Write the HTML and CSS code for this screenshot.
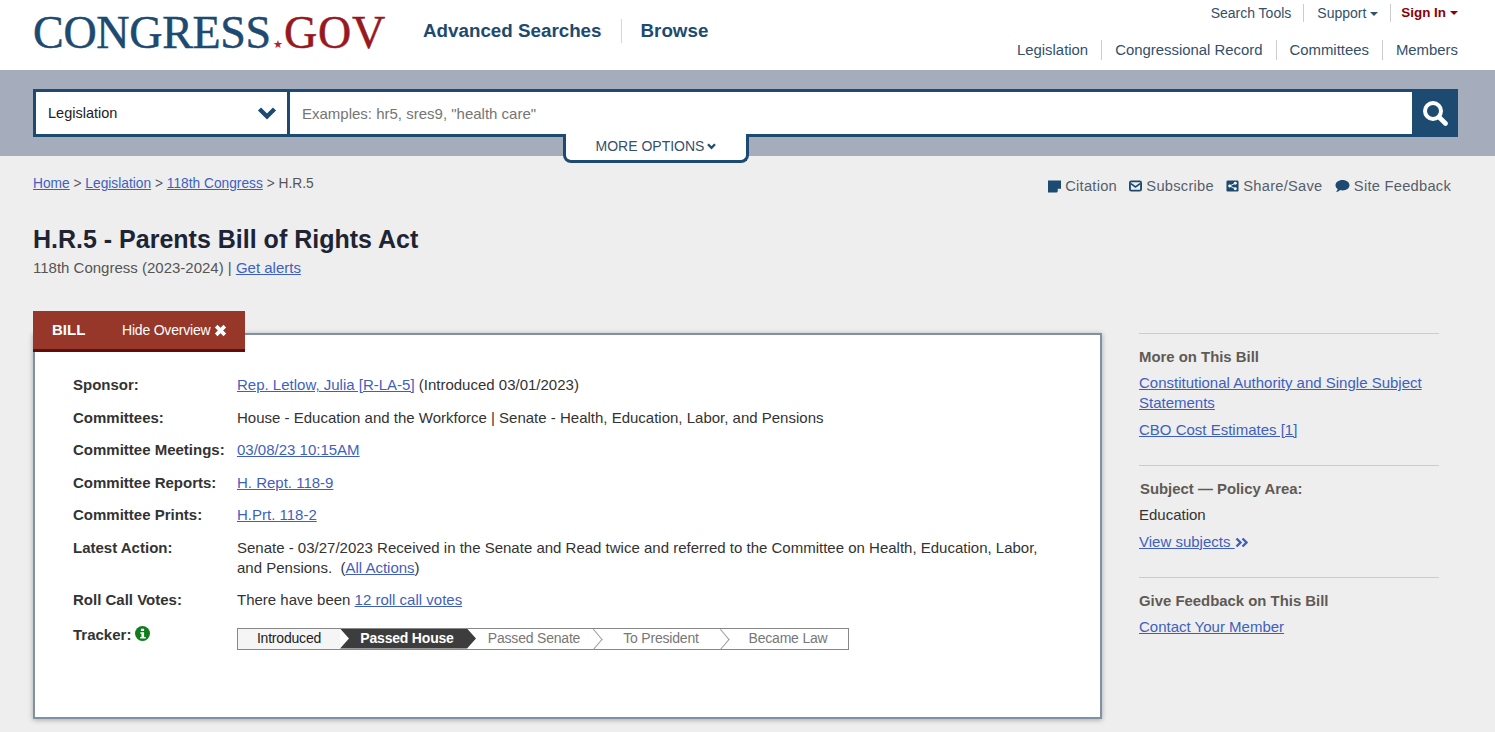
FILE: index.html
```html
<!DOCTYPE html>
<html lang="en">
<head>
<meta charset="utf-8">
<title>H.R.5 - Parents Bill of Rights Act</title>
<link rel="stylesheet" href="styles.css">
</head>
<body>
<header class="header">
  <div class="logo"><span class="logo-blue">CONGRESS</span><span class="logo-star">★</span><span class="logo-red">GOV</span></div>
  <nav class="mainnav"><a class="first">Advanced Searches</a><a>Browse</a></nav>
  <div class="rightnav">
    <div class="toprow"><a>Search Tools</a><a>Support<i class="caret"></i></a><a class="signin">Sign In<i class="caret"></i></a></div>
    <div class="botrow"><a>Legislation</a><a>Congressional Record</a><a>Committees</a><a>Members</a></div>
  </div>
</header>
<section class="searchband">
  <div class="searchbox">
    <div class="select"><span>Legislation</span>
      <svg class="chev" viewBox="0 0 20 14" width="20" height="14"><path d="M2.500 3 10 10.500 17.500 3" fill="none" stroke="#1d4a70" stroke-width="4.400"/></svg>
    </div>
    <div class="input">Examples: hr5, sres9, "health care"</div>
    <div class="go"><svg viewBox="0 0 26 26" width="26" height="26"><circle cx="11" cy="11" r="8" fill="none" stroke="#fff" stroke-width="4"/><path d="M17 17l6.500 6.500" stroke="#fff" stroke-width="4.600" stroke-linecap="round"/></svg></div>
  </div>
  <div class="more">MORE OPTIONS<svg viewBox="0 0 10 8" width="9" height="7"><path d="M1 1.500 5 5.500 9 1.500" fill="none" stroke="#1d4a70" stroke-width="2.600"/></svg></div>
</section>
<main class="main">
  <div class="crumbrow">
    <div class="crumbs"><a>Home</a> &gt; <a>Legislation</a> &gt; <a>118th Congress</a> &gt; H.R.5</div>
    <div class="tools">
      <span><svg viewBox="0 0 14 14" width="13" height="14"><path d="M0 1h14v8.500L9.500 14H0z" fill="#1d4a70"/><path d="M10.500 13.500v-3.500h3.500z" fill="#eee"/></svg> Citation</span>
      <span><svg viewBox="0 0 14 14" width="13" height="14"><rect x="1" y="2" width="12" height="10" rx="1.500" fill="none" stroke="#1d4a70" stroke-width="2"/><path d="M2 4.500 7 8l5-3.500" fill="none" stroke="#1d4a70" stroke-width="1.800"/></svg> Subscribe</span>
      <span><svg viewBox="0 0 14 14" width="13" height="14"><rect x="0.500" y="1" width="13" height="12" rx="1.500" fill="#1d4a70"/><circle cx="10" cy="4" r="1.600" fill="#fff"/><circle cx="10" cy="10" r="1.600" fill="#fff"/><circle cx="4" cy="7" r="1.600" fill="#fff"/><path d="M10 4 4 7l6 3" fill="none" stroke="#fff"/></svg> Share/Save</span>
      <span><svg viewBox="0 0 15 14" width="15" height="14"><path d="M7.500 1c3.900 0 7 2.300 7 5.200s-3.100 5.200-7 5.200c-.8 0-1.600-.1-2.300-.3C4 12.300 2.500 13 1 13c.9-.8 1.500-1.800 1.700-2.900C1.300 9.200.5 7.700.5 6.200.5 3.300 3.600 1 7.500 1z" fill="#1d4a70"/></svg> Site Feedback</span>
    </div>
  </div>
  <h1 class="title">H.R.5 - Parents Bill of Rights Act</h1>
  <div class="sub">118th Congress (2023-2024) | <a>Get alerts</a></div>
  <div class="columns">
    <div class="overview">
      <div class="tab"><b>BILL</b><span>Hide Overview <svg viewBox="0 0 12 12" width="13" height="13"><path d="M2 2l8 8M10 2l-8 8" stroke="#fff" stroke-width="3.400"/></svg></span></div>
      <div class="panel">
        <table class="facts">
          <tr><th>Sponsor:</th><td><a>Rep. Letlow, Julia [R-LA-5]</a> (Introduced 03/01/2023)</td></tr>
          <tr><th>Committees:</th><td>House - Education and the Workforce | Senate - Health, Education, Labor, and Pensions</td></tr>
          <tr><th>Committee Meetings:</th><td><a>03/08/23 10:15AM</a></td></tr>
          <tr><th>Committee Reports:</th><td><a>H. Rept. 118-9</a></td></tr>
          <tr><th>Committee Prints:</th><td><a>H.Prt. 118-2</a></td></tr>
          <tr><th>Latest Action:</th><td>Senate - 03/27/2023 Received in the Senate and Read twice and referred to the Committee on Health, Education, Labor, and Pensions.&nbsp; (<a>All Actions</a>)</td></tr>
          <tr><th>Roll Call Votes:</th><td>There have been <a>12 roll call votes</a></td></tr>
          <tr class="trackrow"><th>Tracker: <svg class="info" viewBox="0 0 14 14" width="15" height="15"><circle cx="7" cy="7" r="7" fill="#0f7d1c"/><path d="M5.500 2.500h3v2.200h-3zM5 5.800h3.500v4.400H10v1.500H4.800v-1.500H6V7.300H5z" fill="#fff"/></svg></th>
            <td><ol class="tracker">
              <li class="done">Introduced</li><li class="now"><span>Passed House</span></li><li>Passed Senate</li><li>To President</li><li>Became Law</li>
            </ol></td></tr>
        </table>
      </div>
    </div>
    <aside class="side">
      <section><h3>More on This Bill</h3><p><a>Constitutional Authority and Single Subject Statements</a></p><p><a>CBO Cost Estimates [1]</a></p></section>
      <section><h3 class="nudge">Subject — Policy Area:</h3><p>Education</p><p><a>View subjects </a><svg viewBox="0 0 14 10" width="14" height="11"><path d="M1.500 1 5.500 5 1.500 9M7.500 1l4 4-4 4" fill="none" stroke="#3f5fbf" stroke-width="2.400"/></svg></p></section>
      <section><h3>Give Feedback on This Bill</h3><p><a>Contact Your Member</a></p></section>
    </aside>
  </div>
</main>
</body>
</html>
```
FILE: styles.css
```css
* { box-sizing: border-box; }
html, body { margin: 0; height: 732px; overflow: hidden; }
body { font-family: "Liberation Sans", Arial, sans-serif; font-size: 15px; color: #333; background: #eee; }
a { color: inherit; }

.header { height: 70px; background: #fff; display: flex; padding: 0 37px 0 33px; }
.logo { font-family: "Liberation Serif", serif; font-size: 46px; line-height: 42px; padding-top: 12px; letter-spacing: -0.3px; width: 370px; white-space: nowrap; flex: none; -webkit-text-stroke: .5px; }
.logo-blue { color: #1d4a70; }
.logo-red { color: #97191f; letter-spacing: .8px; }
.logo-star { color: #b2232a; font-size: 11px; margin: 0 1px 0 2px; letter-spacing: 0; -webkit-text-stroke: 0; }
.mainnav { display: flex; align-items: flex-start; padding-top: 19px; color: #1d4a70; font-weight: bold; font-size: 18.8px; line-height: 24px; }
.mainnav a { padding: 0 0 0 19px; }
.mainnav .first { padding: 0 19px 0 20px; border-right: 1px solid #d5d5d5; }
.rightnav { margin-left: auto; color: #33506b; text-align: right; }
.toprow, .botrow { display: flex; justify-content: flex-end; }
.toprow { padding-top: 4px; font-size: 14px; line-height: 18px; }
.toprow a { padding: 0 12px 0 13px; border-right: 1px solid #ccc; }
.toprow a:last-child { border: 0; padding-right: 0; padding-left: 10px; }
.signin { color: #8b0000; font-size: 13.4px; font-weight: bold; }
.caret { display: inline-block; border: 4.500px solid transparent; border-top-color: currentColor; border-bottom: 0; vertical-align: 2px; margin-left: 4px; }
.botrow { padding-top: 18px; font-size: 14.9px; line-height: 20px; }
.botrow a { padding: 0 13px; border-right: 1px solid #ccc; }
.botrow a:last-child { border: 0; padding-right: 0; }

.searchband { height: 86px; background: #a5adbd; padding: 19px 37px 0 33px; position: relative; }
.searchbox { height: 48px; display: flex; background: #fff; border: 3px solid #1d4a70; }
.select { width: 254px; border-right: 3px solid #1d4a70; padding: 0 10px 0 12px; display: flex; align-items: center; justify-content: space-between; color: #222; font-size: 14.5px; flex: none; }
.input { flex: 1; padding: 1px 0 0 12px; display: flex; align-items: center; color: #757575; font-size: 15px; }
.go { width: 46px; margin: -3px -3px -3px 0; background: #1d4a70; display: flex; align-items: center; justify-content: center; }
.more { position: absolute; left: 563px; top: 64px; width: 186px; height: 29px; background: #fff; border: 3px solid #1d4a70; border-top: 0; border-radius: 0 0 8px 8px; text-align: center; font-size: 14px; line-height: 24px; color: #33506b; }
.more svg { margin-left: 3px; vertical-align: 1px; }

.main { padding: 0 37px 0 33px; }
.crumbrow { display: flex; justify-content: space-between; height: 60px; padding-top: 19px; }
.crumbs { font-size: 13.75px; line-height: 17px; color: #555; }
.crumbs a, .sub a, .facts a, .side a { color: #3f5fbf; text-decoration: underline; }
.tools { display: flex; gap: 12px; padding: 2px 7px 0 0; font-size: 14.7px; line-height: 19px; color: #555e6b; letter-spacing: .25px; }
.tools svg { vertical-align: -2px; }
.title { margin: 0; font-size: 25px; line-height: 30px; color: #1e2433; padding-top: 8px; }
.sub { font-size: 15px; line-height: 20px; color: #555; padding-top: 4px; }

.columns { display: flex; padding-top: 33px; }
.overview { width: 1069px; flex: none; position: relative; padding-top: 22px; }
.tab { position: absolute; left: 0; top: 0; width: 212px; height: 41px; background: #96372a; border-bottom: 3px solid #5e0f0c; color: #fff; display: flex; align-items: center; padding: 0 0 2px 19px; z-index: 1; font-size: 14px; }
.tab b { font-size: 15px; width: 70px; }
.tab span { letter-spacing: -.2px; white-space: nowrap; padding-top: 2px; }
.tab svg { vertical-align: -2px; }
.panel { height: 386px; background: #fff; border: 2px solid #7f92a5; box-shadow: 0 1px 5px rgba(0,0,0,.3); padding: 40px 38px 0 38px; }
.facts { border-collapse: collapse; width: 100%; }
.facts th { width: 164px; text-align: left; vertical-align: top; font-weight: bold; color: #333; font-size: 15px; line-height: 20px; padding: 0 0 12.500px 0; white-space: nowrap; }
.facts td { vertical-align: top; line-height: 20px; padding: 0 20px 12.500px 0; color: #333; font-size: 15px; }
.info { vertical-align: -1px; margin-left: -1px; }
.trackrow th { padding-top: 2px; }
.trackrow td { padding-top: 5px; }
.tracker { list-style: none; margin: 0; padding: 0; display: flex; width: 612px; height: 22px; border: 1px solid #888; background: #fff; font-size: 14px; line-height: 19px; color: #777; }
.tracker li { flex: 0 0 127px; padding-left: 7px; text-align: center; position: relative; white-space: nowrap; letter-spacing: -.2px; }
.tracker li:not(.done):not(.now):not(:last-child)::after { content: ""; position: absolute; right: -7px; top: 3px; width: 14.140px; height: 14.140px; transform: scaleX(.85) rotate(45deg); border-top: 1px solid #999; border-right: 1px solid #999; z-index: 1; }
.tracker .done { flex: 0 0 102px; padding: 0; background: #f5f5f5; color: #222; }
.tracker .now { color: #fff; font-weight: bold; }
.tracker .now::before { content: ""; position: absolute; left: 0; top: 0; right: -9px; bottom: 0; background: #3d3d3d; clip-path: polygon(0 0, calc(100% - 9px) 0, 100% 50%, calc(100% - 9px) 100%, 0 100%, 9px 50%); }
.tracker .now span { position: relative; }

.side { width: 300px; margin-left: 37px; padding-top: 22px; }
.side section { border-top: 1px solid #ccc; padding: 13px 0 18px; }
.side h3 { margin: 0 0 6px; font-size: 14.9px; line-height: 20px; color: #5f5a55; }
.side h3.nudge { padding-left: 1px; }
.side p { margin: 0 0 7px; line-height: 20px; font-size: 15px; }
.side svg { vertical-align: -1px; }
```
